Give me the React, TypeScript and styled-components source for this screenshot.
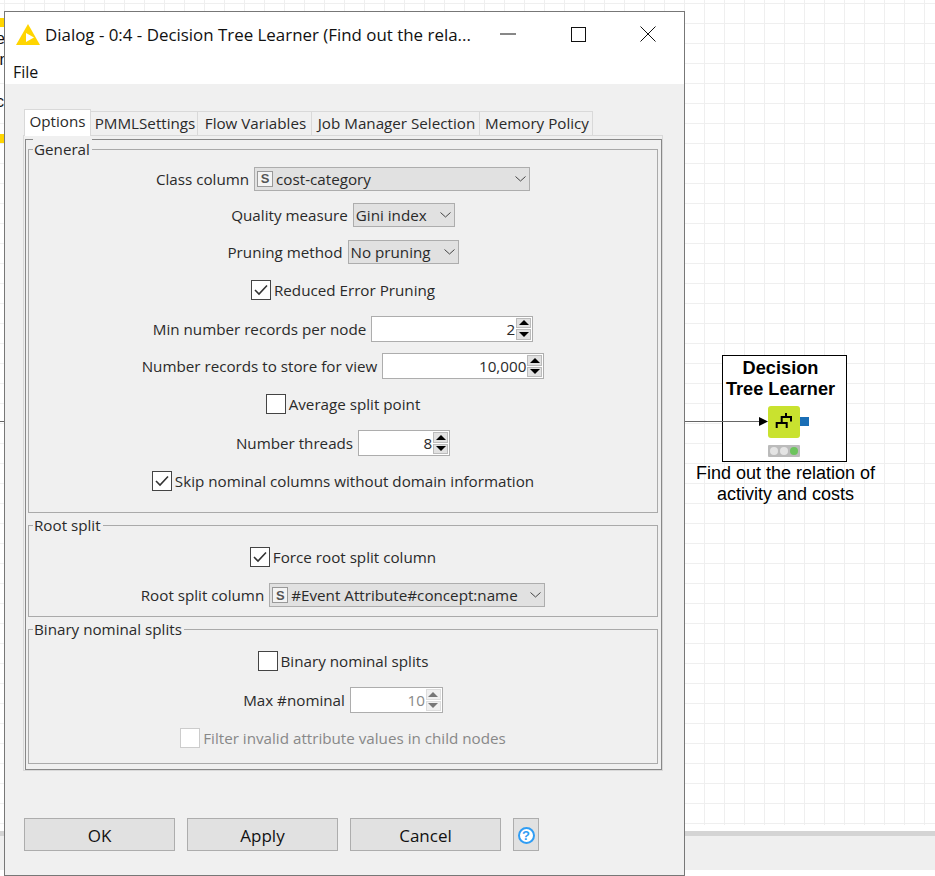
import React from 'react';
import styled, { createGlobalStyle } from 'styled-components';

const FONT = '"Open Sans", "Noto Sans", sans-serif';

const GlobalStyle = createGlobalStyle`
  html, body {
    margin: 0;
    padding: 0;
    background: #fff;
    overflow: hidden;
  }
  body {
    font-family: ${FONT};
    font-size: 15.2px;
    color: #1a1a1a;
  }
`;

const Page = styled.div`
  width: 935px;
  height: 876px;
  display: flex;
  flex-direction: column;
  overflow: hidden;
`;

const Canvas = styled.div`
  position: relative;
  height: 825px;
  margin-bottom: 6px;
  background-color: #fff;
  background-image:
    linear-gradient(to right, #efefef 1px, transparent 1px),
    linear-gradient(to bottom, #efefef 1px, transparent 1px);
  background-size: 20px 20px;
  background-position: 4px 3px;
`;

const Splitter = styled.div`
  height: 5px;
  background: #d4d4d4;
`;

const StatusPanel = styled.div`
  height: 34px;
  background: #efefef;
`;

const YellowMark = styled.div<{ $top: number }>`
  position: absolute;
  left: 0;
  top: ${(p) => p.$top}px;
  width: 4px;
  height: 9px;
  background: #ffd500;
`;

const ClippedText = styled.div<{ $top: number }>`
  position: absolute;
  left: -4px;
  top: ${(p) => p.$top}px;
  font-family: "Liberation Sans", sans-serif;
  font-size: 16px;
  line-height: 18px;
  color: #111;
`;

const Wire = styled.div`
  position: absolute;
  left: 0;
  top: 421px;
  width: 760px;
  height: 1px;
  background: #666;
`;

/* node on the workflow canvas */
const NodeBox = styled.div`
  position: absolute;
  left: 722px;
  top: 355px;
  width: 123px;
  height: 105px;
  border: 1px solid #000;
  background: #fff;
`;

const NodeTitle = styled.div`
  font-family: "Liberation Sans", sans-serif;
  font-weight: 700;
  font-size: 18.2px;
  line-height: 21px;
  color: #000;
  text-align: center;
  padding-right: 8px;
  margin-top: 2px;
`;

const NodeArt = styled.svg`
  position: absolute;
  left: 758px;
  top: 405px;
`;

const NodeLabel = styled.div`
  position: absolute;
  left: 684px;
  top: 463px;
  width: 203px;
  font-family: "Liberation Sans", sans-serif;
  font-size: 18px;
  line-height: 21px;
  color: #000;
  text-align: center;
`;

/* the dialog window floats over the canvas */
const Dialog = styled.div`
  position: absolute;
  left: 4px;
  top: 11px;
  width: 679px;
  height: 863px;
  border: 1px solid #777;
  background: #f0f0f0;
  display: flex;
  flex-direction: column;
`;

const Header = styled.div`
  background: #fff;
  height: 72px;
  flex: none;
`;

const TitleBar = styled.div`
  height: 44px;
  display: flex;
  align-items: center;
  padding: 0 1px 0 11px;
`;

const AppLogo = styled.svg`
  flex: none;
  margin-right: 5px;
  margin-top: 2px;
`;

const TitleText = styled.div`
  flex: 1;
  font-size: 16.9px;
  color: #111;
  white-space: nowrap;
  margin-top: 1px;
`;

const WindowButton = styled.div`
  width: 70px;
  height: 44px;
  flex: none;
  display: flex;
  align-items: center;
  justify-content: center;
`;

const MenuBar = styled.div`
  height: 28px;
  padding: 3px 0 0 8px;
  box-sizing: border-box;
  display: flex;
  align-items: center;
  font-size: 16px;
  color: #111;
`;

const Body = styled.div`
  flex: 1;
  padding: 25px 0 0 18px;
  display: flex;
  flex-direction: column;
`;

const TabRow = styled.div`
  display: flex;
  align-items: flex-end;
  height: 27px;
  padding-left: 1px;
  position: relative;
  z-index: 1;
  margin-bottom: -1px;
`;

const Tab = styled.div<{ $width: number; $active?: boolean }>`
  width: ${(p) => p.$width}px;
  height: ${(p) => (p.$active ? 27 : 25)}px;
  box-sizing: border-box;
  border: 1px solid #d9d9d9;
  border-bottom: ${(p) => (p.$active ? 'none' : '1px solid #d9d9d9')};
  border-left: ${(p) => (p.$active ? '1px solid #d9d9d9' : 'none')};
  background: ${(p) => (p.$active ? '#fff' : '#f0f0f0')};
  padding: ${(p) => (p.$active ? '0 0 5px' : '0 0 1px 2px')};
  display: flex;
  align-items: center;
  justify-content: center;
  font-size: 15.2px;
  color: #2a2a2a;
  white-space: nowrap;
`;

const TabPane = styled.div`
  width: 640px;
  height: 636px;
  box-sizing: border-box;
  border: 1px solid #d9d9d9;
  padding: 3px 0 0 1px;
`;

const PaneInner = styled.div`
  width: 637px;
  height: 631px;
  box-sizing: border-box;
  border: 1px solid #888;
  padding: 9px 0 0 2px;
  display: flex;
  flex-direction: column;
`;

const Group = styled.div<{ $height: number; $gap: number }>`
  position: relative;
  width: 630px;
  height: ${(p) => p.$height}px;
  flex: none;
  box-sizing: border-box;
  border: 1px solid #aaa;
  margin-bottom: ${(p) => p.$gap}px;
  padding-top: 11px;
`;

const Legend = styled.div`
  position: absolute;
  left: 4px;
  top: -11px;
  padding: 0 2px 0 1px;
  background: #f0f0f0;
  font-size: 15.2px;
  line-height: 21px;
  color: #2a2a2a;
`;

const Row = styled.div<{ $height: number }>`
  height: ${(p) => p.$height}px;
  display: flex;
  align-items: center;
  justify-content: center;
  gap: 5px;
  font-size: 15.2px;
  color: #2a2a2a;
  white-space: nowrap;
`;

const Combo = styled.div<{ $width: number }>`
  width: ${(p) => p.$width}px;
  height: 24px;
  flex: none;
  box-sizing: border-box;
  border: 1px solid #adadad;
  background: #e1e1e1;
  display: flex;
  align-items: center;
  padding: 0 3px 0 2px;
  gap: 3px;
  color: #2a2a2a;
`;

const ComboText = styled.span`
  flex: 1;
`;

const TypeBadge = styled.span`
  width: 16px;
  height: 16px;
  flex: none;
  box-sizing: border-box;
  border: 1px solid #999;
  background: #f4f4f4;
  display: flex;
  align-items: center;
  justify-content: center;
  font-family: "Liberation Sans", sans-serif;
  font-weight: 700;
  font-size: 13px;
  color: #555;
`;

const Chevron = styled.svg`
  flex: none;
`;

const CheckField = styled.label`
  display: flex;
  align-items: center;
  gap: 3px;
`;

const Box = styled.span<{ $disabled?: boolean }>`
  width: 20px;
  height: 20px;
  box-sizing: border-box;
  border: 1px solid ${(p) => (p.$disabled ? '#ccc' : '#444')};
  background: #fff;
  display: flex;
  align-items: center;
  justify-content: center;
`;

const DisabledText = styled.span`
  color: #888;
`;

const Spinner = styled.div<{ $width: number; $disabled?: boolean }>`
  width: ${(p) => p.$width}px;
  height: 26px;
  flex: none;
  box-sizing: border-box;
  border: 1px solid #adadad;
  background: #fff;
  display: flex;
  align-items: center;
  padding: 1px;
  color: ${(p) => (p.$disabled ? '#888' : '#2a2a2a')};
`;

const SpinnerValue = styled.span`
  flex: 1;
  text-align: right;
  padding-right: 1px;
`;

const SpinnerButtons = styled.div`
  width: 15px;
  height: 22px;
  display: flex;
  flex-direction: column;
  gap: 1px;
`;

const SpinnerButton = styled.div<{ $disabled?: boolean; $down?: boolean }>`
  flex: 1;
  box-sizing: border-box;
  border: 1px solid ${(p) => (p.$disabled ? '#ddd' : '#bbb')};
  background: ${(p) => (p.$disabled ? '#f0f0f0' : '#e1e1e1')};
  display: flex;
  align-items: center;
  justify-content: center;
  &::after {
    content: '';
    border-left: 5px solid transparent;
    border-right: 5px solid transparent;
    ${(p) => (p.$down ? 'border-top' : 'border-bottom')}: 5px solid ${(p) => (p.$disabled ? '#777' : '#000')};
  }
`;

const ButtonRow = styled.div`
  display: flex;
  gap: 12px;
  padding-left: 1px;
  margin-top: 47px;
`;

const ActionButton = styled.button<{ $width: number }>`
  width: ${(p) => p.$width}px;
  height: 33px;
  box-sizing: border-box;
  border: 1px solid #adadad;
  background: #e1e1e1;
  padding: 1px 0 0;
  font-family: ${FONT};
  font-size: 17px;
  color: #111;
  display: flex;
  align-items: center;
  justify-content: center;
`;

const HelpGlyph = styled.span`
  width: 17px;
  height: 17px;
  box-sizing: border-box;
  border: 2px solid #2f9df4;
  border-radius: 50%;
  background: #fff;
  display: flex;
  align-items: center;
  justify-content: center;
  font-family: "Liberation Sans", sans-serif;
  font-weight: 700;
  font-size: 13px;
  color: #2f9df4;
`;

const Chev: React.FC = () => (
  <Chevron width="11" height="6" viewBox="0 0 11 6">
    <path d="M0.5 0.5 L5.5 5 L10.5 0.5" fill="none" stroke="#444" strokeWidth="1" />
  </Chevron>
);

const Check: React.FC = () => (
  <svg width="14" height="12" viewBox="0 0 14 12">
    <path d="M1 6 L5 10 L13 1.5" fill="none" stroke="#333" strokeWidth="1.6" />
  </svg>
);

const CheckRow: React.FC<{ label: string; checked?: boolean; disabled?: boolean }> = ({ label, checked, disabled }) => (
  <CheckField>
    <Box $disabled={disabled}>{checked && <Check />}</Box>
    {disabled ? <DisabledText>{label}</DisabledText> : label}
  </CheckField>
);

const NumberField: React.FC<{ value: string; width: number; disabled?: boolean }> = ({ value, width, disabled }) => (
  <Spinner $width={width} $disabled={disabled}>
    <SpinnerValue>{value}</SpinnerValue>
    <SpinnerButtons>
      <SpinnerButton $disabled={disabled} />
      <SpinnerButton $disabled={disabled} $down />
    </SpinnerButtons>
  </Spinner>
);

const App: React.FC = () => {
  return (
    <Page>
      <GlobalStyle />
      <Canvas>
        <YellowMark $top={18} />
        <YellowMark $top={134} />
        <ClippedText $top={30}>ec</ClippedText>
        <ClippedText $top={51}>in</ClippedText>
        <ClippedText $top={93}>co</ClippedText>
        <NodeBox>
          <NodeTitle>
            Decision
            <br />
            Tree Learner
          </NodeTitle>
        </NodeBox>
        <Wire />
        <NodeLabel>
          Find out the relation of
          <br />
          activity and costs
        </NodeLabel>
        <NodeArt width="52" height="54" viewBox="0 0 52 54">
          <path d="M1 12 L10 16.5 L1 21 Z" fill="#000" />
          <rect x="10" y="1" width="32" height="32" rx="3" fill="#c9e22f" />
          <rect x="42" y="12" width="9" height="9" fill="#1a6eb5" />
          <path
            d="M28 8 V12 M23.7 18 V12 H33 V16.5 M18.7 23 V18 H28.7 V23"
            fill="none"
            stroke="#000"
            strokeWidth="2"
          />
          <rect x="10" y="40" width="32" height="12" rx="1" fill="#bbb" />
          <circle cx="16" cy="46" r="4" fill="#e4e4e4" />
          <circle cx="26" cy="46" r="4" fill="#e4e4e4" />
          <circle cx="36" cy="46" r="4" fill="#6cc45d" />
        </NodeArt>
        <Dialog>
          <Header>
            <TitleBar>
              <AppLogo width="24" height="22" viewBox="0 0 24 22">
                <path d="M12 0 L24 21 L0 21 Z" fill="#ffd500" />
                <path d="M10 9 L18 13.5 L10 18 Z" fill="#fff" />
              </AppLogo>
              <TitleText>Dialog - 0:4 - Decision Tree Learner (Find out the rela...</TitleText>
              <WindowButton>
                <svg width="16" height="2" viewBox="0 0 16 2">
                  <path d="M0 1 H16" stroke="#111" strokeWidth="1" />
                </svg>
              </WindowButton>
              <WindowButton>
                <svg width="15" height="15" viewBox="0 0 15 15">
                  <rect x="0.5" y="0.5" width="14" height="14" fill="none" stroke="#111" strokeWidth="1" />
                </svg>
              </WindowButton>
              <WindowButton>
                <svg width="16" height="16" viewBox="0 0 16 16">
                  <path d="M0.5 0.5 L15.5 15.5 M15.5 0.5 L0.5 15.5" stroke="#111" strokeWidth="1" />
                </svg>
              </WindowButton>
            </TitleBar>
            <MenuBar>File</MenuBar>
          </Header>
          <Body>
            <TabRow>
              <Tab $width={67} $active>Options</Tab>
              <Tab $width={107}>PMMLSettings</Tab>
              <Tab $width={114}>Flow Variables</Tab>
              <Tab $width={168}>Job Manager Selection</Tab>
              <Tab $width={113}>Memory Policy</Tab>
            </TabRow>
            <TabPane>
              <PaneInner>
                <Group $height={364} $gap={12}>
                  <Legend>General</Legend>
                  <Row $height={35}>
                    Class column
                    <Combo $width={276}>
                      <TypeBadge>S</TypeBadge>
                      <ComboText>cost-category</ComboText>
                      <Chev />
                    </Combo>
                  </Row>
                  <Row $height={37}>
                    Quality measure
                    <Combo $width={102}>
                      <ComboText>Gini index</ComboText>
                      <Chev />
                    </Combo>
                  </Row>
                  <Row $height={37}>
                    Pruning method
                    <Combo $width={111}>
                      <ComboText>No pruning</ComboText>
                      <Chev />
                    </Combo>
                  </Row>
                  <Row $height={40}>
                    <CheckRow label="Reduced Error Pruning" checked />
                  </Row>
                  <Row $height={37}>
                    Min number records per node
                    <NumberField value="2" width={162} />
                  </Row>
                  <Row $height={38}>
                    Number records to store for view
                    <NumberField value="10,000" width={162} />
                  </Row>
                  <Row $height={38}>
                    <CheckRow label="Average split point" />
                  </Row>
                  <Row $height={40}>
                    Number threads
                    <NumberField value="8" width={92} />
                  </Row>
                  <Row $height={36}>
                    <CheckRow label="Skip nominal columns without domain information" checked />
                  </Row>
                </Group>
                <Group $height={92} $gap={12}>
                  <Legend>Root split</Legend>
                  <Row $height={40}>
                    <CheckRow label="Force root split column" checked />
                  </Row>
                  <Row $height={36}>
                    Root split column
                    <Combo $width={276}>
                      <TypeBadge>S</TypeBadge>
                      <ComboText>#Event Attribute#concept:name</ComboText>
                      <Chev />
                    </Combo>
                  </Row>
                </Group>
                <Group $height={135} $gap={0}>
                  <Legend>Binary nominal splits</Legend>
                  <Row $height={39}>
                    <CheckRow label="Binary nominal splits" />
                  </Row>
                  <Row $height={40}>
                    Max #nominal
                    <NumberField value="10" width={93} disabled />
                  </Row>
                  <Row $height={36}>
                    <CheckRow label="Filter invalid attribute values in child nodes" disabled />
                  </Row>
                </Group>
              </PaneInner>
            </TabPane>
            <ButtonRow>
              <ActionButton $width={151}>OK</ActionButton>
              <ActionButton $width={151}>Apply</ActionButton>
              <ActionButton $width={151}>Cancel</ActionButton>
              <ActionButton $width={26}>
                <HelpGlyph>?</HelpGlyph>
              </ActionButton>
            </ButtonRow>
          </Body>
        </Dialog>
      </Canvas>
      <Splitter />
      <StatusPanel />
    </Page>
  );
};

export default App;
